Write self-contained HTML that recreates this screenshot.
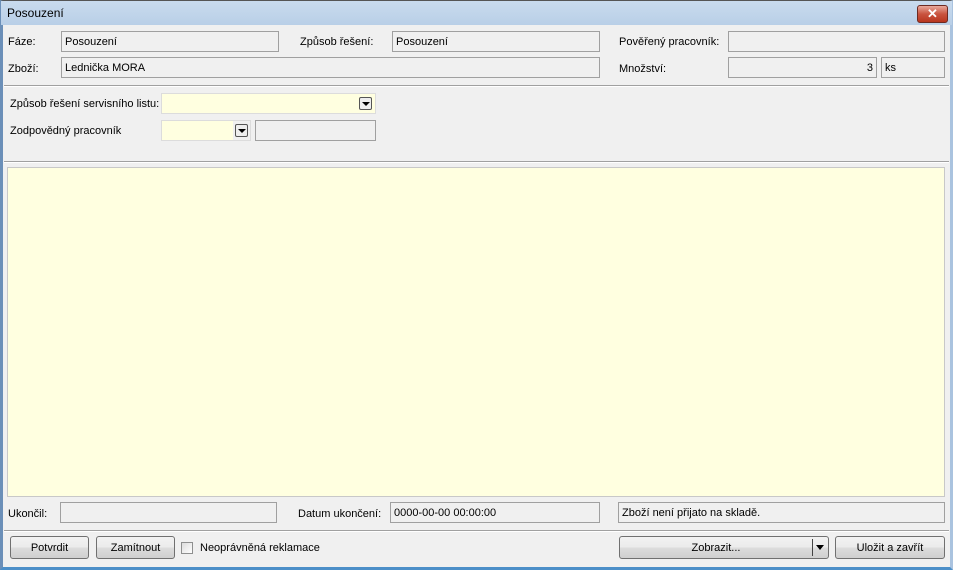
<!DOCTYPE html>
<html><head><meta charset="utf-8"><style>
*{box-sizing:border-box;margin:0;padding:0}
body{width:953px;height:570px;overflow:hidden;background:#f0f0f0;font-family:"Liberation Sans",Tahoma,sans-serif;font-size:11px;color:#000;position:relative}
.a{position:absolute}
.l{position:absolute;font-size:11px;line-height:13px;white-space:nowrap}
.b{position:absolute;border:1px solid #a0a0a0;background:#f0f0f0;height:21px;padding:1px 3px 0;line-height:19px;white-space:nowrap;font-size:11px}
.y{background:#ffffe0;border-color:#dcdcdc}
.btn{position:absolute;height:23px;border:1px solid #707070;border-radius:3px;background:linear-gradient(#f2f2f2,#ebebeb 50%,#dddddd 51%,#cfcfcf);text-align:center;line-height:23px;font-size:11px}
.sep{position:absolute;left:4px;right:4px;height:2px;border-top:1px solid #a0a0a0;border-bottom:1px solid #fff}
.dd{position:absolute;width:13px;height:13px;border:1px solid #555;border-radius:2px;background:#eee}
.dd:after{content:"";position:absolute;left:2px;top:4px;border-left:4px solid transparent;border-right:4px solid transparent;border-top:4px solid #000}
</style></head><body>
<div class="a" style="left:0;top:0;width:953px;height:570px;border:1px solid #555;border-left:3px solid #6b8fb8;border-right:3px solid #aac3df;border-bottom:3px solid #4c8fc8"></div>
<div class="a" style="left:1px;top:1px;width:951px;height:24px;background:linear-gradient(#c9dbee,#b9cfe7)"></div>
<div class="l" style="left:7px;top:7px;font-size:12px">Posouzení</div>
<div class="a" style="left:917px;top:5px;width:31px;height:18px;border:1px solid #6d2a22;border-radius:3px;background:linear-gradient(#e9a99c,#c9543f 50%,#b8361f);color:#fff;text-align:center;font-weight:bold;font-size:13px;line-height:16px">✕</div>

<div class="l" style="left:8px;top:36px">Fáze:</div>
<div class="b" style="left:61px;top:31px;width:218px">Posouzení</div>
<div class="l" style="left:300px;top:36px">Způsob řešení:</div>
<div class="b" style="left:392px;top:31px;width:208px">Posouzení</div>
<div class="l" style="left:619px;top:36px">Pověřený pracovník:</div>
<div class="b" style="left:728px;top:31px;width:217px"></div>

<div class="l" style="left:8px;top:63px">Zboží:</div>
<div class="b" style="left:61px;top:57px;width:539px">Lednička MORA</div>
<div class="l" style="left:619px;top:63px">Množství:</div>
<div class="b" style="left:728px;top:57px;width:149px;text-align:right">3</div>
<div class="b" style="left:881px;top:57px;width:64px">ks</div>

<div class="sep" style="top:85px"></div>
<div class="l" style="left:10px;top:98px">Způsob řešení servisního listu:</div>
<div class="b y" style="left:161px;top:93px;width:215px"></div>
<div class="dd" style="left:359px;top:97px"></div>
<div class="l" style="left:10px;top:125px">Zodpovědný pracovník</div>
<div class="b y" style="left:161px;top:120px;width:90px"></div>
<div class="a" style="left:233px;top:121px;width:17px;height:19px;background:#f0f0f0"></div>
<div class="dd" style="left:235px;top:124px"></div>
<div class="b" style="left:255px;top:120px;width:121px"></div>

<div class="sep" style="top:161px"></div>
<div class="a" style="left:7px;top:167px;width:938px;height:330px;background:#ffffe0;border:1px solid #c8c8c8"></div>

<div class="l" style="left:8px;top:508px">Ukončil:</div>
<div class="b" style="left:60px;top:502px;width:217px"></div>
<div class="l" style="left:298px;top:508px">Datum ukončení:</div>
<div class="b" style="left:390px;top:502px;width:210px">0000-00-00 00:00:00</div>
<div class="b" style="left:618px;top:502px;width:327px">Zboží není přijato na skladě.</div>

<div class="sep" style="top:530px"></div>
<div class="btn" style="left:10px;top:536px;width:79px">Potvrdit</div>
<div class="btn" style="left:96px;top:536px;width:79px">Zamítnout</div>
<div class="a" style="left:181px;top:542px;width:12px;height:12px;border:1px solid #8e8f8f;background:linear-gradient(135deg,#dcdcdc,#fff)"></div>
<div class="l" style="left:200px;top:542px">Neoprávněná reklamace</div>
<div class="btn" style="left:619px;top:536px;width:210px;padding-right:16px">Zobrazit...</div>
<div class="a" style="left:812px;top:539px;width:1px;height:17px;background:#444"></div>
<div class="a" style="left:816px;top:545px;border-left:4px solid transparent;border-right:4px solid transparent;border-top:5px solid #000"></div>
<div class="btn" style="left:835px;top:536px;width:110px">Uložit a zavřít</div>
</body></html>
